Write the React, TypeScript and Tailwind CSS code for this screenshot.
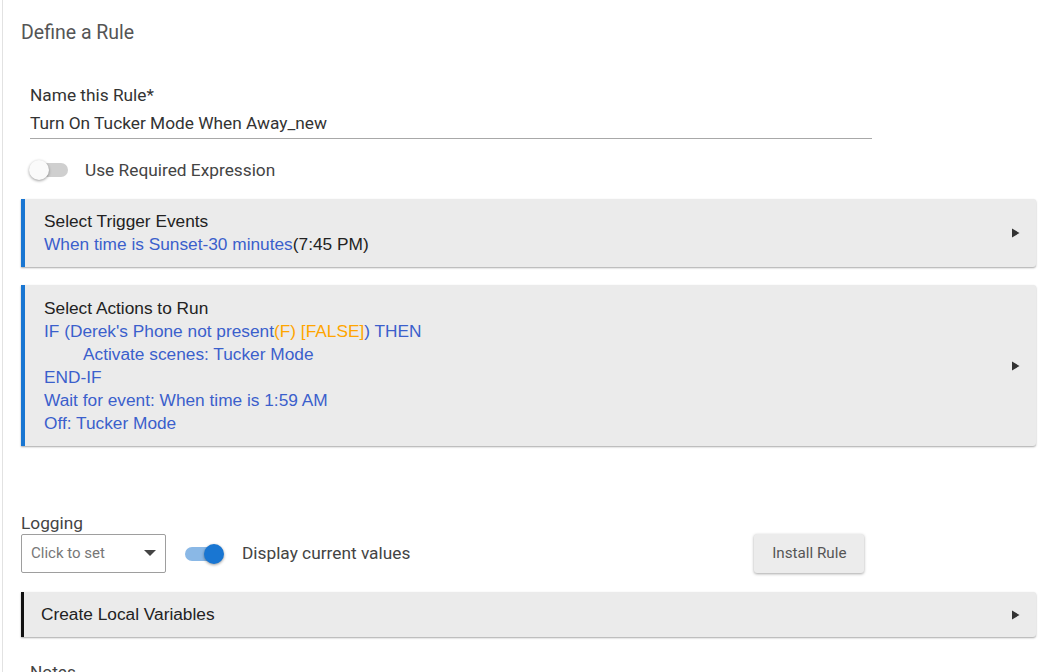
import type { ReactNode } from "react";

const roboto = "font-['Roboto','Liberation_Sans',sans-serif]";
const arial = "font-['Liberation_Sans',Arial,sans-serif]";

function Arrow() {
  return (
    <svg width="9" height="10" viewBox="0 0 9 10" className="shrink-0">
      <path d="M1 0.5 L8.5 5 L1 9.5 Z" fill="#333" />
    </svg>
  );
}

function Card({ accent, children, className = "" }: { accent: string; children: ReactNode; className?: string }) {
  return (
    <div className={`flex items-center justify-between rounded-r-[3px] border-l-4 bg-[#ebebeb] pr-[16px] shadow-[0_1px_2px_rgba(0,0,0,0.35)] ${accent} ${className}`}>
      <div className="flex-1">{children}</div>
      <Arrow />
    </div>
  );
}

function Toggle({ on }: { on: boolean }) {
  return (
    <div className="relative h-[20px] w-[40px] shrink-0">
      <div className={`absolute left-[1px] top-[3px] h-[14px] w-[38px] rounded-full ${on ? "bg-[#8ab8e6]" : "bg-[#cfcfcf]"}`} />
      <div
        className={`absolute top-0 h-[20px] w-[20px] rounded-full shadow-[0_1px_3px_rgba(0,0,0,0.4)] ${on ? "left-[20px] bg-[#1976d2]" : "left-0 bg-[#fafafa]"}`}
      />
    </div>
  );
}

export default function App() {
  const blue = "text-[#3b5fcc]";
  const orange = "text-[#ffa500]";
  return (
    <div className="h-[672px] overflow-hidden bg-white">
      <div className={`ml-[2px] h-full border-l border-[#e2e2e2] pl-[18px] pr-[28px] ${roboto}`}>
        <h1 className="pt-[22px] text-[19.5px] leading-[22px] text-[#555]">Define a Rule</h1>

        <div className="ml-[9px] mt-[42px] w-[842px]">
          <div className="text-[17.3px] leading-[19px] text-[#333]">Name this Rule*</div>
          <div className="border-b border-[#a8a8a8] pb-[5px] pt-[9px] text-[17.3px] leading-[19px] text-[#333]">
            Turn On Tucker Mode When Away_new
          </div>
        </div>

        <div className="ml-[8px] mt-[21px] flex items-center gap-[16px]">
          <Toggle on={false} />
          <span className="text-[17.3px] leading-[19px] text-[#444]">Use Required Expression</span>
        </div>

        <div className={`mt-[19px] ${arial} text-[17.3px] leading-[23px]`}>
          <Card accent="border-[#1976d2]" className="h-[68px] pl-[19px]">
            <div className="text-[#222]">Select Trigger Events</div>
            <div className={blue}>
              When time is Sunset-30 minutes<span className="text-[#222]">(7:45 PM)</span>
            </div>
          </Card>

          <Card accent="border-[#1976d2]" className="mt-[18px] h-[161px] pl-[19px]">
            <div className="text-[#222]">Select Actions to Run</div>
            <div className={blue}>
              IF (Derek's Phone not present<span className={orange}>(F) [FALSE]</span>) THEN
            </div>
            <div className={`${blue} pl-[39px]`}>Activate scenes: Tucker Mode</div>
            <div className={blue}>END-IF</div>
            <div className={blue}>Wait for event: When time is 1:59 AM</div>
            <div className={blue}>Off: Tucker Mode</div>
          </Card>
        </div>

        <div className="mt-[68px] text-[17.3px] leading-[19px] text-[#444]">Logging</div>
        <div className="mt-[1px] flex items-center">
          <div className="flex h-[39px] w-[145px] items-center justify-between rounded-[2px] border border-[#9e9e9e] pl-[9px] pr-[9px]">
            <span className="text-[15px] text-[#777]">Click to set</span>
            <svg width="12" height="7" viewBox="0 0 12 7">
              <path d="M0 0 L12 0 L6 6 Z" fill="#444" />
            </svg>
          </div>
          <div className="ml-[18px]">
            <Toggle on />
          </div>
          <span className="ml-[18px] text-[17.3px] text-[#444]">Display current values</span>
          <button className="ml-[344px] h-[39px] w-[110px] rounded-[3px] bg-[#ececec] text-[15.2px] text-[#555] shadow-[0_1px_3px_rgba(0,0,0,0.35)]">
            Install Rule
          </button>
        </div>

        <div className={`mt-[19px] ${arial} text-[17.3px]`}>
          <Card accent="border-l-[3px] border-[#111]" className="h-[45px] pl-[17px]">
            <div className="text-[#222]">Create Local Variables</div>
          </Card>
        </div>

        <div className="ml-[9px] mt-[26px] text-[17.3px] leading-[19px] text-[#444]">Notes</div>
      </div>
    </div>
  );
}
